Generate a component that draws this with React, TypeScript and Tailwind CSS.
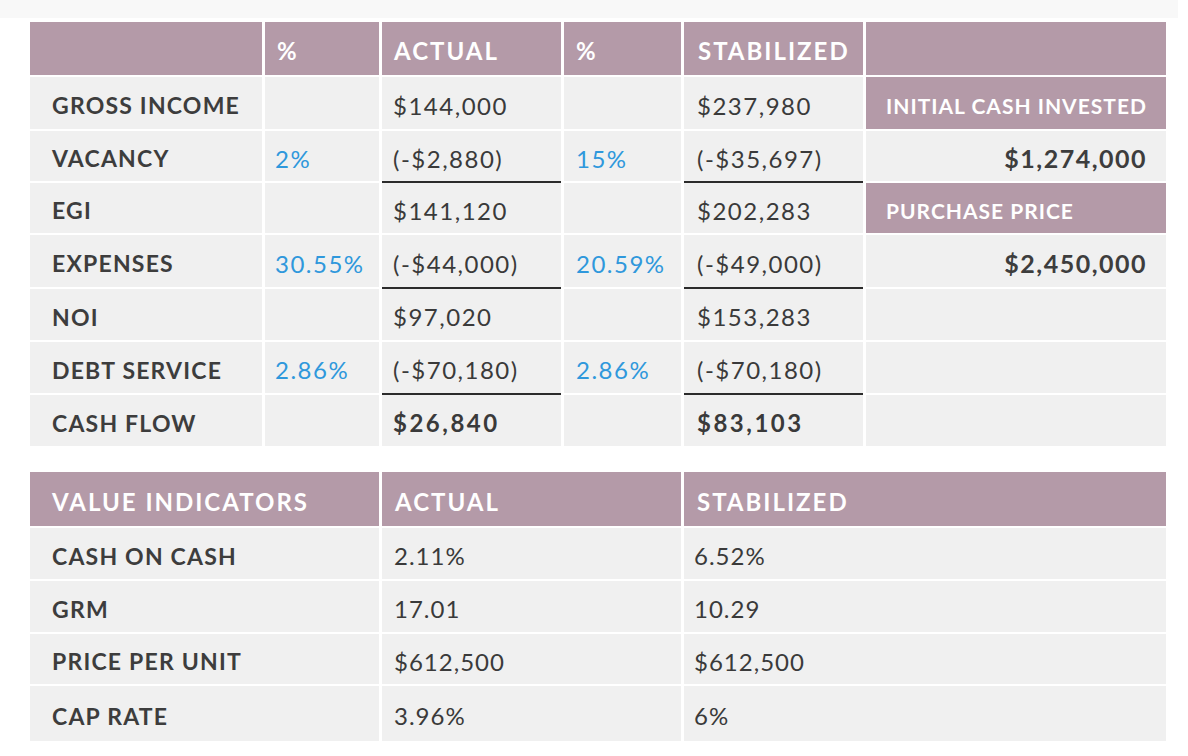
import React from 'react';

type Side = { kind: 'head' | 'value' | 'empty'; text?: string };
type Row = {
  label: string;
  p1?: string;
  actual: string;
  p2?: string;
  stab: string;
  line?: boolean;
  bold?: boolean;
  side: Side;
};

const rows: Row[] = [
  { label: 'GROSS INCOME', actual: '$144,000', stab: '$237,980', side: { kind: 'head', text: 'INITIAL CASH INVESTED' } },
  { label: 'VACANCY', p1: '2%', actual: '(-$2,880)', p2: '15%', stab: '(-$35,697)', line: true, side: { kind: 'value', text: '$1,274,000' } },
  { label: 'EGI', actual: '$141,120', stab: '$202,283', side: { kind: 'head', text: 'PURCHASE PRICE' } },
  { label: 'EXPENSES', p1: '30.55%', actual: '(-$44,000)', p2: '20.59%', stab: '(-$49,000)', line: true, side: { kind: 'value', text: '$2,450,000' } },
  { label: 'NOI', actual: '$97,020', stab: '$153,283', side: { kind: 'empty' } },
  { label: 'DEBT SERVICE', p1: '2.86%', actual: '(-$70,180)', p2: '2.86%', stab: '(-$70,180)', line: true, side: { kind: 'empty' } },
  { label: 'CASH FLOW', actual: '$26,840', stab: '$83,103', bold: true, side: { kind: 'empty' } },
];

const indicators = [
  { label: 'CASH ON CASH', actual: '2.11%', stab: '6.52%' },
  { label: 'GRM', actual: '17.01', stab: '10.29' },
  { label: 'PRICE PER UNIT', actual: '$612,500', stab: '$612,500' },
  { label: 'CAP RATE', actual: '3.96%', stab: '6%' },
];

const headBase = 'flex items-center pt-[5px] bg-[#b49aa8] text-white font-bold';
const head = `${headBase} text-[24px] tracking-[2px]`;
const cell = 'flex items-center pt-[5px] bg-[#f0f0f0]';
const label = 'font-bold text-[23px] tracking-[1.2px] text-[#3d3d3d]';
const value = 'text-[24px] text-[#3a3a3a]';
const pct = 'text-[24px] tracking-[1.5px] text-[#2f98dc]';
const rule = 'relative after:absolute after:left-0 after:right-0 after:-bottom-[2px] after:h-[2px] after:bg-[#2b2b2b]';

export default function App() {
  return (
    <div className="w-[1188px] h-[756px] bg-white font-['Lato',sans-serif]">
      <div className="h-[18px] w-[1178px] bg-[#f8f8f8]" />

      <div className="ml-[30px] mt-[4px] grid w-[1136px] grid-cols-[232px_114px_179px_117px_179px_300px] grid-rows-[53px_52px_50px_50px_52px_51px_51px_51px] gap-x-[3px] gap-y-[2px]">
        <div className={head} />
        <div className={`${head} pl-[12px]`}>%</div>
        <div className={`${head} pl-[12px]`}>ACTUAL</div>
        <div className={`${head} pl-[12px]`}>%</div>
        <div className={`${head} pl-[14px]`}>STABILIZED</div>
        <div className={head} />

        {rows.map((r) => (
          <React.Fragment key={r.label}>
            <div className={`${cell} pl-[22px] ${label}`}>{r.label}</div>
            <div className={`${cell} pl-[10px] ${pct}`}>{r.p1}</div>
            <div className={`${cell} pl-[11px] ${value} ${r.bold ? 'font-bold tracking-[2.5px]' : 'tracking-[1.5px]'} ${r.line ? rule : ''}`}>{r.actual}</div>
            <div className={`${cell} pl-[12px] ${pct}`}>{r.p2}</div>
            <div className={`${cell} pl-[13px] ${value} ${r.bold ? 'font-bold tracking-[2.5px]' : 'tracking-[1.5px]'} ${r.line ? rule : ''}`}>{r.stab}</div>
            {r.side.kind === 'head' ? (
              <div className={`${headBase} pl-[20px] text-[21px] tracking-[1px]`}>{r.side.text}</div>
            ) : r.side.kind === 'value' ? (
              <div className={`${cell} justify-end pr-[19px] font-bold text-[25px] tracking-[1.5px] text-[#3d3d3d]`}>{r.side.text}</div>
            ) : (
              <div className={cell} />
            )}
          </React.Fragment>
        ))}
      </div>

      <div className="ml-[30px] mt-[26px] grid w-[1136px] grid-cols-[349px_299px_482px] grid-rows-[54px_51px_51px_50px_55px] gap-x-[3px] gap-y-[2px]">
        <div className={`${head} pl-[22px]`}>VALUE INDICATORS</div>
        <div className={`${head} pl-[13px]`}>ACTUAL</div>
        <div className={`${head} pl-[13px]`}>STABILIZED</div>
        {indicators.map((r) => (
          <React.Fragment key={r.label}>
            <div className={`${cell} pl-[22px] ${label}`}>{r.label}</div>
            <div className={`${cell} pl-[12px] ${value} tracking-[1px]`}>{r.actual}</div>
            <div className={`${cell} pl-[10px] ${value} tracking-[1px]`}>{r.stab}</div>
          </React.Fragment>
        ))}
      </div>
    </div>
  );
}
